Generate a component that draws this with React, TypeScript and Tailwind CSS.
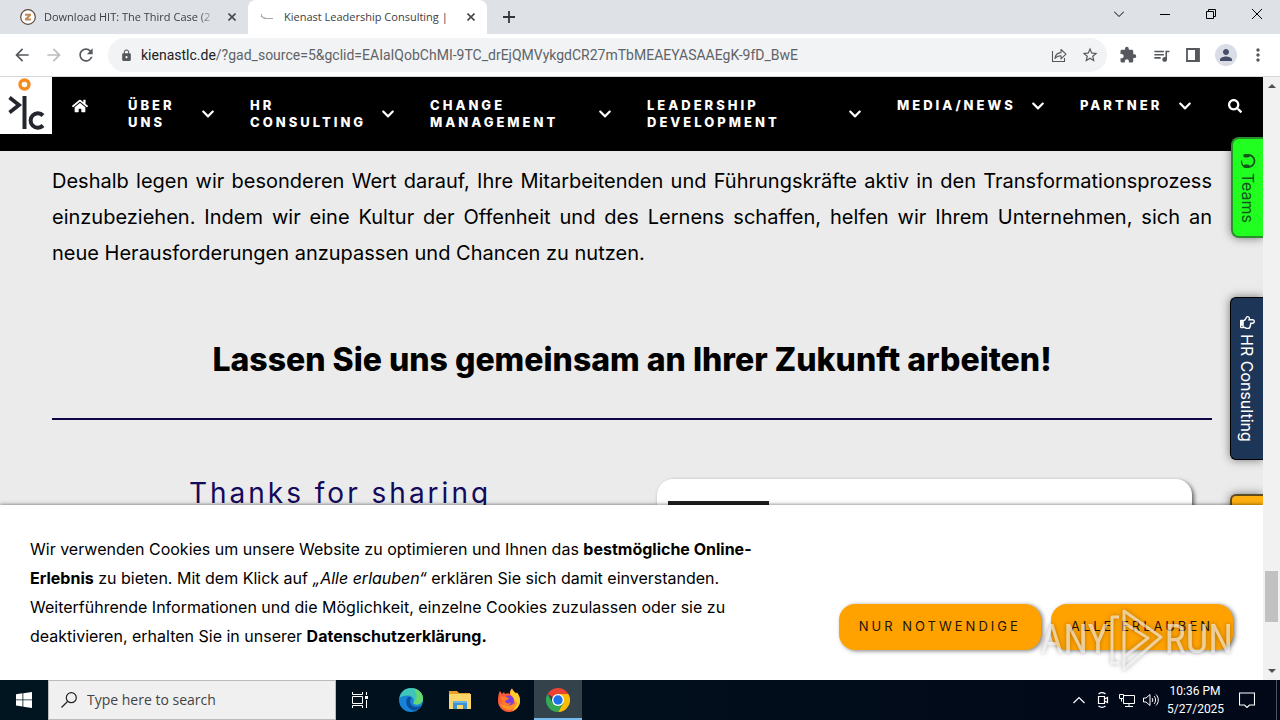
import { FaChevronDown, FaHome, FaRegHandPointUp, FaSearch } from 'react-icons/fa';
import {
  MdArrowBack,
  MdArrowForward,
  MdExtension,
  MdLock,
  MdMoreVert,
  MdPerson,
  MdQueueMusic,
  MdRefresh,
  MdStarBorder,
} from 'react-icons/md';

const navItems = [
  { label: 'Über uns', width: 'w-[87px]', tall: true },
  { label: 'HR Consulting', width: 'w-[145px]', tall: true },
  { label: 'Change Management', width: 'w-[182px]', tall: true },
  { label: 'Leadership Development', width: 'w-[215px]', tall: true },
  { label: 'Media/News', width: 'w-[148px]', tall: false },
  { label: 'Partner', width: 'w-[112px]', tall: false },
];

function CloseGlyph() {
  return (
    <svg className="h-2 w-2" viewBox="0 0 8 8" stroke="#45494d" strokeWidth="1.6" fill="none">
      <path d="M0.5 0.5l7 7M7.5 0.5l-7 7" />
    </svg>
  );
}

function TabStrip() {
  return (
    <div className="flex h-[34px] shrink-0 bg-[#dee1e6] text-[11px] text-[#3c4043]">
      <div className="flex w-[248px] items-center pl-5 pr-3">
        <svg className="mr-2 h-4 w-4 shrink-0" viewBox="0 0 16 16">
          <circle cx="8" cy="8" r="7.3" fill="#fff" stroke="#5d4a3c" strokeWidth="1.2" />
          <path d="M5 4.8h6v1.8L8 9.5h3v2H5V9.6l3-2.9H5z" fill="#c08a58" />
        </svg>
        <span className="mr-3 flex-1 whitespace-nowrap mask-r-from-90%">Download HIT: The Third Case (2</span>
        <button aria-label="Close tab">
          <CloseGlyph />
        </button>
      </div>
      <div className="flex w-[239px] items-center rounded-t-lg bg-white pl-3 pr-3">
        <svg className="mr-2 h-4 w-4 shrink-0" viewBox="0 0 16 16" fill="none" stroke="#a6a9ad">
          <path d="M1 7c2 2 4 2.5 6 2.5h6" strokeWidth="1.2" />
          <path d="M1.5 5v3" />
        </svg>
        <span className="mr-3 flex-1 whitespace-nowrap">Kienast Leadership Consulting |</span>
        <button aria-label="Close tab">
          <CloseGlyph />
        </button>
      </div>
      <button className="ml-4 self-center" aria-label="New tab">
        <svg className="h-3 w-3" viewBox="0 0 12 12" stroke="#33373b" strokeWidth="1.8">
          <path d="M6 0v12M0 6h12" />
        </svg>
      </button>
      <div className="ml-auto flex items-center gap-9 pb-1.5 pr-[18px] text-black">
        <button aria-label="Search tabs">
          <svg className="h-2.5 w-2.5" viewBox="0 0 10 10" fill="none" stroke="currentColor">
            <path d="M0 2.5l5 5 5-5" />
          </svg>
        </button>
        <button aria-label="Minimize">
          <svg className="h-2.5 w-2.5" viewBox="0 0 10 10" stroke="currentColor">
            <path d="M0 5.5h10" />
          </svg>
        </button>
        <button aria-label="Restore">
          <svg className="h-2.5 w-2.5" viewBox="0 0 10 10" fill="none" stroke="currentColor">
            <path d="M0.5 2.5h7v7h-7zM2.5 2.5v-2h7v7h-2" />
          </svg>
        </button>
        <button aria-label="Close window">
          <svg className="h-2.5 w-2.5" viewBox="0 0 10 10" stroke="currentColor">
            <path d="M0 0l10 10M10 0L0 10" />
          </svg>
        </button>
      </div>
    </div>
  );
}

function Toolbar() {
  return (
    <div className="flex h-[43px] shrink-0 items-center border-b border-[#d5d7da] bg-white px-3 text-[#55595e]">
      <button aria-label="Back">
        <MdArrowBack size={20} />
      </button>
      <button className="ml-3 text-[#babcbe]" aria-label="Forward">
        <MdArrowForward size={20} />
      </button>
      <button className="ml-3" aria-label="Reload">
        <MdRefresh size={20} />
      </button>
      <div className="ml-3 flex h-[34px] flex-1 items-center rounded-full bg-[#f1f3f4] pl-3 pr-2">
        <MdLock size={13} />
        <div className="ml-2 flex-1 font-['Roboto',sans-serif] text-sm text-[#5f6368]">
          <span className="text-[#202124]">kienastlc.de</span>
          /?gad_source=5&amp;gclid=EAIaIQobChMI-9TC_drEjQMVykgdCR27mTbMEAEYASAAEgK-9fD_BwE
        </div>
        <button aria-label="Share">
          <svg className="h-4 w-4" viewBox="0 0 16 16" fill="none" stroke="currentColor" strokeWidth="1.1">
            <path d="M1.5 4v10.5h12V11" />
            <path
              d="M4 11.5C4.3 8 6.5 5.8 10 5.6V2.5l5 4.7-5 4.6V8.7C7.5 8.6 5.5 9.5 4 11.5z"
              strokeLinejoin="round"
            />
          </svg>
        </button>
        <button className="ml-3.5" aria-label="Bookmark">
          <MdStarBorder size={18} />
        </button>
      </div>
      <div className="flex items-center gap-[15px] pl-3">
        <button aria-label="Extensions">
          <MdExtension size={18} />
        </button>
        <button aria-label="Media control">
          <MdQueueMusic size={19} />
        </button>
        <button aria-label="Side panel">
          <svg className="h-3.5 w-3.5" viewBox="0 0 14 14">
            <path d="M1 1h12v12H1z" fill="none" stroke="currentColor" strokeWidth="1.8" />
            <path d="M9 1h4v12H9z" fill="currentColor" />
          </svg>
        </button>
        <button
          className="flex h-[22px] w-[22px] items-center justify-center rounded-full bg-[#dadce6] text-[#454d68]"
          aria-label="Profile"
        >
          <MdPerson size={18} />
        </button>
        <button className="-ml-1" aria-label="Menu">
          <MdMoreVert size={20} />
        </button>
      </div>
    </div>
  );
}

function SiteHeader() {
  return (
    <header className="flex h-[74px] shrink-0 bg-black font-['Inter',sans-serif] text-white">
      <a href="#" aria-label="Startseite" className="h-[57px] w-[52px] shrink-0 bg-white">
        <svg className="h-[57px] w-[52px]" viewBox="0 0 52 57" fill="none" stroke="#23262c">
          <circle cx="24.5" cy="7.5" r="4.5" stroke="#f68b1e" strokeWidth="3.4" />
          <path d="M9.5 20.5l9.5 7.5-9.5 7.5" strokeWidth="3.8" />
          <path d="M24.5 19v33" strokeWidth="4" />
          <path d="M43 38.5a7.2 7.2 0 1 0 0 10" strokeWidth="4" />
        </svg>
      </a>
      <nav className="flex flex-1 items-start pl-5 pr-[21px] pt-5">
        <a href="#" aria-label="Home" className="mt-px">
          <FaHome size={16} />
        </a>
        <ul className="ml-10 flex flex-1 gap-[35px]">
          {navItems.map((item) => (
            <li key={item.label} className={item.width}>
              <button className="flex w-full items-center justify-between text-left text-[13px] font-extrabold uppercase leading-[17px] tracking-[3px]">
                <span className={item.tall ? 'w-min' : ''}>{item.label}</span>
                <FaChevronDown size={14} />
              </button>
            </li>
          ))}
        </ul>
        <button aria-label="Suche" className="mt-0.5">
          <FaSearch size={14} />
        </button>
      </nav>
    </header>
  );
}

function SideTabs() {
  return (
    <div className="absolute right-0 top-[60px] flex flex-col items-end font-['Inter',sans-serif] text-base leading-5">
      <a
        href="#"
        className="flex h-[101px] w-8 flex-col items-center gap-1 rounded-l-lg border-2 border-r-0 border-[#2a8f2c] bg-[#20ff20] pt-[14px] text-[#14551c] shadow-[0_0_10px_rgba(0,0,0,0.5)]"
      >
        <svg className="h-4 w-4 shrink-0" viewBox="0 0 16 16" fill="none" stroke="currentColor">
          <path d="M6 2.2C11 1.2 14.5 4 14.5 8S11 14.8 6 13.8" strokeWidth="1.8" />
          <path d="M5 2.7h3M5 13.3h3" strokeWidth="3.6" strokeLinecap="round" />
          <path d="M4 13.3C1.8 12.5 1.5 9.5 1.5 7.5" strokeWidth="1.3" />
        </svg>
        <span className="[writing-mode:vertical-rl]">Teams</span>
      </a>
      <a
        href="#"
        className="mt-[59px] flex h-[163px] w-[33px] flex-col items-center gap-1 rounded-l-md border border-r-0 border-black bg-[#1d3557] pt-[17px] text-white shadow-[0_0_10px_rgba(0,0,0,0.5)]"
      >
        <FaRegHandPointUp size={15} className="shrink-0 rotate-90" />
        <span className="[writing-mode:vertical-rl]">HR Consulting</span>
      </a>
      <a
        href="#"
        aria-label="Kontakt"
        className="mt-[34px] h-[100px] w-[33px] rounded-l-md border-2 border-r-0 border-[#5e4c20] bg-[#ffb010] shadow-[0_0_10px_rgba(0,0,0,0.5)]"
      />
    </div>
  );
}

function Article() {
  return (
    <main className="flex-1 overflow-hidden bg-[#ebebeb] pl-[52px] pr-[51px] pt-3 font-['Inter',sans-serif] text-black">
      <p className="text-justify text-xl leading-9">
        Deshalb legen wir besonderen Wert darauf, Ihre Mitarbeitenden und Führungskräfte aktiv in den
        Transformationsprozess einzubeziehen. Indem wir eine Kultur der Offenheit und des Lernens schaffen, helfen wir
        Ihrem Unternehmen, sich an neue&nbsp;Herausforderungen anzupassen und Chancen zu nutzen.
      </p>
      <h2 className="mt-16 text-center text-[32px] font-extrabold leading-[50px]">
        Lassen Sie uns gemeinsam an Ihrer Zukunft arbeiten!
      </h2>
      <hr className="mt-[33px] border-t-2 border-[#0e0545]" />
      <div className="mt-[59px] grid grid-cols-2 gap-2">
        <h3 className="text-center text-[28px] leading-7 tracking-[3px] text-[#130a5c]">Thanks for sharing</h3>
        <div className="ml-[21px] mr-5 h-40 rounded-2xl bg-white px-[11px] pt-[22px] shadow-[2px_2px_4px_rgba(0,0,0,0.6)]">
          <div className="h-24 w-[101px] bg-[#202020]" />
        </div>
      </div>
    </main>
  );
}

function Watermark() {
  return (
    <div className="pointer-events-none absolute bottom-2 right-[30px] flex items-center font-['Liberation_Sans_Narrow','Roboto_Condensed',Roboto,sans-serif] text-[40px] leading-none text-white/60 drop-shadow-[0_0_2px_rgba(0,0,0,0.5)]">
      <span>ANY</span>
      <svg className="h-16 w-14" viewBox="0 0 56 64" fill="none" stroke="currentColor" strokeWidth="3">
        <path d="M10 9H3v46h7M15 3l37 26-37 32zM15 3v46M15 15l24 15-24 19" strokeLinejoin="round" />
      </svg>
      <span>RUN</span>
    </div>
  );
}

function CookieBanner() {
  const button =
    'h-[46px] rounded-2xl bg-[#ffa200] px-5 text-[13px] uppercase tracking-[3px] text-[#24130a] shadow-[2px_1px_4px_rgba(0,0,0,0.5)]';

  return (
    <section className="absolute inset-x-0 bottom-0 flex h-[175px] justify-between bg-white px-[30px] font-['Inter',sans-serif] text-black shadow-[0_0_4px_rgba(0,0,0,0.6)]">
      <p className="w-[740px] pt-[30px] text-base leading-[29px]">
        Wir verwenden Cookies um unsere Website zu optimieren und Ihnen das{' '}
        <strong>bestmögliche Online-Erlebnis</strong> zu bieten. Mit dem Klick auf <em>„Alle erlauben“</em> erklären Sie
        sich damit einverstanden. Weiterführende Informationen und die Möglichkeit, einzelne Cookies zuzulassen oder sie
        zu deaktivieren, erhalten Sie in unserer{' '}
        <a href="#" className="font-bold">
          Datenschutzerklärung.
        </a>
      </p>
      <div className="flex items-end gap-2.5 pb-[30px]">
        <button className={button}>Nur notwendige</button>
        <button className={button}>Alle erlauben</button>
      </div>
      <Watermark />
    </section>
  );
}

function Scrollbar() {
  return (
    <div className="flex w-[17px] shrink-0 flex-col items-center justify-between bg-[#f1f1f1] py-1.5">
      <svg className="h-1.5 w-2" viewBox="0 0 8 6" fill="#505050">
        <path d="M4 1l4 4H0z" />
      </svg>
      <div className="mt-[436px] h-[51px] w-[13px] bg-[#c1c1c1]" />
      <svg className="h-1.5 w-2" viewBox="0 0 8 6" fill="#505050">
        <path d="M4 5l4-4H0z" />
      </svg>
    </div>
  );
}

function EdgeIcon() {
  return (
    <svg className="h-6 w-6" viewBox="0 0 24 24">
      <circle cx="12" cy="12" r="12" fill="#1683d8" />
      <path
        d="M0.5 10C1.5 4 6 0 12 0c7 0 12 5 12 10.5 0 4-3 6-6.5 6-2.5 0-3.7-1-3-2.2C16 11 13 7.5 9 7.5c-4 0-7 1-8.5 2.5z"
        fill="#3fc6b8"
      />
      <path d="M15 0.5c5.5 1.5 9 5.5 9 10 0 4-3 6-6.5 6-2.5 0-3.7-1-3-2.2C19 12 18 5 15 .5z" fill="#67d86f" />
      <path
        d="M9 9c-4 5-1 12 6 13.5 3-.4 5.5-2 7-4.5-6 2.5-11 0-11-5 0-1.5.8-2.5 1.5-3C11.5 9 10 8.700 9 9z"
        fill="#0b4f9c"
      />
    </svg>
  );
}

function FolderIcon() {
  return (
    <svg className="h-6 w-6" viewBox="0 0 24 24">
      <path d="M1 3h8l2 2h11v3H1z" fill="#e8a126" />
      <path d="M1 6h22v15H1z" fill="#fbd66b" />
      <path d="M5 13h14v8h-4v-4H9v4H5z" fill="#3c93d4" />
      <path d="M5 13h14v2H5z" fill="#69b5e8" />
    </svg>
  );
}

function FirefoxIcon() {
  return (
    <svg className="h-6 w-6" viewBox="0 0 24 24">
      <path
        d="M2 5l1-2 2 3 2-2 1 2c2-1 4-1 5 0 0-2 .5-4 2-5.5 1 2.5 3 3.5 4 5l1-1c2 2.5 3 5 3 8.5 0 6-5 11-11 11S1 19 1 13c0-3 .3-6 1-8z"
        fill="#ff5a36"
      />
      <path
        d="M13 6c0-2 .5-4 2-5.5 1 2.5 3 3.5 4 5l1-1c2 2.5 3 5 3 8.5 0 5-4 9-8 10 4-4 5-10-2-17z"
        fill="#ffca2e"
      />
      <path d="M3 15c1 4 5 7 9 7 5 0 8-4 8-9-2 4-9 7-17 2z" fill="#ff9425" />
      <circle cx="12" cy="12.5" r="5" fill="#7a3ee0" />
      <path d="M4 9c3-1 5 0 8 1-1 2-3 2-4 3 1 3 4 3 6 1-1 5-8 5-9 0z" fill="#ff7b2a" />
    </svg>
  );
}

function ChromeIcon() {
  return (
    <svg className="h-6 w-6" viewBox="0 0 24 24">
      <path d="M12 12L1.6 6A12 12 0 0 1 22.4 6z" fill="#ea4335" />
      <path d="M12 12V6h10.4A12 12 0 0 1 12 24l5.2-9z" fill="#fbbc05" />
      <path d="M12 12l5.2 3L12 24A12 12 0 0 1 1.6 6l5.2 9z" fill="#34a853" />
      <circle cx="12" cy="12" r="6" fill="#fff" />
      <circle cx="12" cy="12" r="4.7" fill="#1a73e8" />
    </svg>
  );
}

function Taskbar() {
  return (
    <footer className="flex h-10 shrink-0 bg-linear-to-r from-[#00151f] to-[#020818] text-white">
      <button className="flex w-12 items-center justify-center" aria-label="Start">
        <svg className="h-4 w-4" viewBox="0 0 16 16" fill="#fff">
          <path d="M0 2.2L6.5 1.3v6.2H0zM7.3 1.2L16 0v7.5H7.3zM0 8.3h6.5v6.2L0 13.6zM7.3 8.3H16V16l-8.7-1.3z" />
        </svg>
      </button>
      <label className="flex w-72 items-center border border-[#b9bcbe] bg-[#f0f0f0] pl-3">
        <svg className="h-4 w-4" viewBox="0 0 16 16" fill="none" stroke="#222" strokeWidth="1.2">
          <circle cx="10.3" cy="5.7" r="5" />
          <path d="M6.5 9.5L0.5 15.5" />
        </svg>
        <input
          className="ml-2.5 w-56 bg-transparent text-sm text-[#444] outline-none placeholder:text-[#444]"
          placeholder="Type here to search"
          aria-label="Search"
        />
      </label>
      <button className="flex w-12 items-center justify-center" aria-label="Task view">
        <svg className="h-4 w-4" viewBox="0 0 16 16" fill="none" stroke="#fff">
          <path d="M0.5 0v2.5h10V0M0.5 4.5h10v7h-10zM0.5 16v-2.5h10V16M14.5 0v3M14.5 8v8" />
          <path d="M13 5.5h3" strokeWidth="3" />
        </svg>
      </button>
      <div className="ml-[3px] flex gap-px">
        <button className="flex w-12 items-center justify-center" aria-label="Edge">
          <EdgeIcon />
        </button>
        <button className="flex w-12 items-center justify-center" aria-label="File Explorer">
          <FolderIcon />
        </button>
        <button className="flex w-12 items-center justify-center" aria-label="Firefox">
          <FirefoxIcon />
        </button>
        <button
          className="flex w-12 items-center justify-center border-b-2 border-[#76b9ed] bg-[#33424b] pt-0.5"
          aria-label="Chrome"
        >
          <ChromeIcon />
        </button>
      </div>
      <div className="ml-auto flex items-center gap-2">
        <button aria-label="Show hidden icons" className="mr-0.5">
          <svg className="h-3 w-3" viewBox="0 0 12 12" fill="none" stroke="#fff" strokeWidth="1.2">
            <path d="M0.5 9L6 3.5 11.5 9" />
          </svg>
        </button>
        <svg className="h-4 w-4" viewBox="0 0 16 16" fill="none" stroke="#fff">
          <path
            d="M3.5 4.5h6v7h-6zM9.5 7l3-1.5v5L9.5 9M3.5 2c2-1.5 5-1.5 7 0M3.5 14c2 1.5 5 1.5 7 0"
            strokeWidth="1.2"
          />
        </svg>
        <svg className="h-4 w-4" viewBox="0 0 16 16" fill="none" stroke="#fff">
          <path d="M5 3.5h10.5v8H4.5V7M10 11.5v3M6 14.5h8M.5 2.5h4v4h-4zM2.5 6.5v3" />
        </svg>
        <svg className="h-4 w-4" viewBox="0 0 16 16" fill="none" stroke="#fff">
          <path d="M.5 6v4h2.500L7 13.5v-11L3 6zM9 6c1 1 1 3 0 4M11 4c2 2 2 6 0 8M13 2.5c3 3 3 8 0 11" />
        </svg>
        <div className="w-14 text-center font-['Roboto',sans-serif] text-xs leading-[18px]">
          <div>10:36 PM</div>
          <div>5/27/2025</div>
        </div>
        <button className="ml-2 mr-[21px]" aria-label="Notifications">
          <svg className="h-4 w-4" viewBox="0 0 16 16" fill="none" stroke="#fff" strokeWidth="1.1">
            <path d="M.5 1h15v12H10.5L8 15.5 5.5 13H.5z" />
          </svg>
        </button>
      </div>
      <div className="w-1 border-l border-[#4a5264]" />
    </footer>
  );
}

export default function App() {
  return (
    <div className="flex h-screen flex-col overflow-hidden font-['Open_Sans',sans-serif]">
      <TabStrip />
      <Toolbar />
      <div className="flex min-h-0 flex-1">
        <div className="relative flex min-w-0 flex-1 flex-col overflow-hidden">
          <SiteHeader />
          <Article />
          <SideTabs />
          <CookieBanner />
        </div>
        <Scrollbar />
      </div>
      <Taskbar />
    </div>
  );
}
